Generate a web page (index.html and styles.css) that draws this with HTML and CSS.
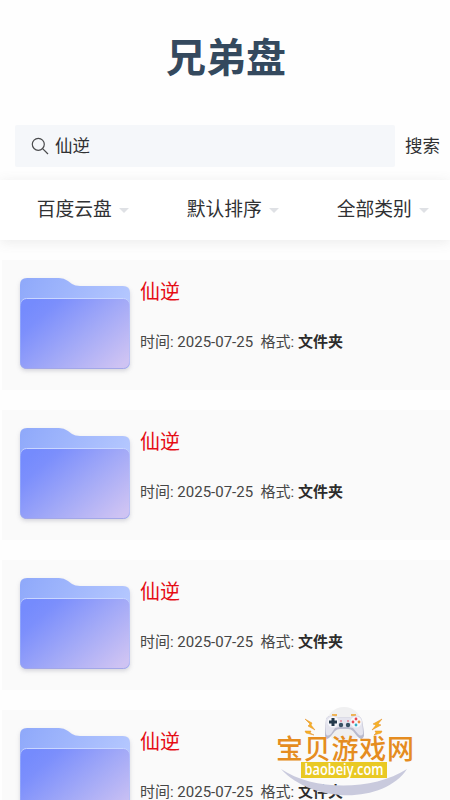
FILE: index.html
```html
<!DOCTYPE html>
<html lang="zh-CN">
<head>
<meta charset="utf-8">
<title>兄弟盘</title>
<link rel="stylesheet" href="styles.css">
</head>
<body>
<svg width="0" height="0" class="defs">
  <defs>
    <linearGradient id="back" x1="0" y1="0" x2="1" y2="0.5"><stop offset="0" stop-color="#8ea8fa"/><stop offset="1" stop-color="#b9cbff"/></linearGradient>
    <linearGradient id="front" x1="0.05" y1="0.15" x2="1" y2="0.85"><stop offset="0" stop-color="#758bfd"/><stop offset="0.15" stop-color="#7c8ffc"/><stop offset="0.55" stop-color="#a2a9f7"/><stop offset="1" stop-color="#cec3f3"/></linearGradient>
    <linearGradient id="edge" x1="0" y1="0" x2="0" y2="1"><stop offset="0" stop-color="#c9d6ff"/><stop offset="0.12" stop-color="#b4c0fc" stop-opacity="0.2"/><stop offset="0.9" stop-color="#8f9bea" stop-opacity="0.2"/><stop offset="1" stop-color="#a3a7e8"/></linearGradient>
    <symbol id="folder" viewBox="0 0 110 94">
      <path d="M0 7Q0 0 7 0H39Q44 0 48 3L52 6Q55 8 60 8H103Q110 8 110 15V84Q110 91 103 91H7Q0 91 0 84Z" fill="url(#back)"/>
      <rect x="0.5" y="20.5" width="109" height="70" rx="6" fill="url(#front)" stroke="url(#edge)"/>
    </symbol>
  </defs>
</svg>
<main class="page">
  <h1 class="title">兄弟盘</h1>
  <div class="search">
    <div class="search-box">
      <svg class="search-icon" width="18" height="18" viewBox="0 0 18 18" fill="none" stroke="#4a4b4d" stroke-width="1.2"><circle cx="7.3" cy="7.3" r="6"/><path d="M11.6 11.6L17 17"/></svg>
      <span>仙逆</span>
    </div>
    <span class="search-action">搜索</span>
  </div>
  <nav class="filters">
    <span class="filter">百度云盘</span>
    <span class="filter">默认排序</span>
    <span class="filter">全部类别</span>
  </nav>
  <section class="list">
    <article class="card"><svg class="folder"><use href="#folder"/></svg><div class="info"><h2>仙逆</h2><p>时间: 2025-07-25&nbsp; 格式: <b>文件夹</b></p></div></article>
    <article class="card"><svg class="folder"><use href="#folder"/></svg><div class="info"><h2>仙逆</h2><p>时间: 2025-07-25&nbsp; 格式: <b>文件夹</b></p></div></article>
    <article class="card"><svg class="folder"><use href="#folder"/></svg><div class="info"><h2>仙逆</h2><p>时间: 2025-07-25&nbsp; 格式: <b>文件夹</b></p></div></article>
    <article class="card"><svg class="folder"><use href="#folder"/></svg><div class="info"><h2>仙逆</h2><p>时间: 2025-07-25&nbsp; 格式: <b>文件夹</b></p></div></article>
  </section>
  <svg class="badge" width="160" height="100" viewBox="0 0 160 100">
    <circle cx="79" cy="25" r="18" fill="#f0f0f1"/>
    <g fill="#f6b326" stroke="#e58c24" stroke-width="0.5">
      <path d="M40 19L47 23L46 25L50 30L43 26L45 24Z"/><path d="M40 31L46 31L45 33L49 35L41 33Z"/>
      <path d="M117 19L108 24L111 25L107 30L116 25L113 24Z"/><path d="M117 31L110 31L111 33L109 35L116 33Z"/>
    </g>
    <path d="M67 15h5M86 15h5" stroke="#efb354" stroke-width="2"/>
    <path d="M61 19Q63 15 69 16L74 17.500H84L89 16Q95 15 97 20Q99 30 99 36Q97 42 92 36L88 31Q86 29 83 29H75Q72 29 70 31L66 36Q61 42 60 36Q60 27 61 19Z" fill="#b9bacd"/>
    <path d="M61 19Q63 15 69 16L74 17.500H84L89 16Q95 15 97 20Q98 29 98 34Q96 37 93 34L88 28L83 27H75L70 28L66 34Q62 37 61 34Q60 27 61 19Z" fill="#e4e4ee"/>
    <circle cx="68" cy="22" r="5.5" fill="#f7f7fb"/><circle cx="91" cy="22" r="5.5" fill="#f7f7fb"/>
    <path d="M68 18v8M64 22h8" stroke="#253a4c" stroke-width="3"/>
    <g fill="#e94755"><circle cx="91" cy="19" r="1.4"/><circle cx="88" cy="22" r="1.4"/></g><circle cx="94" cy="22" r="1.4" fill="#ed8a40"/><circle cx="91" cy="25" r="1.4" fill="#31acc5"/>
    <path d="M75 21h2M82 21h2" stroke="#df5368"/><circle cx="76" cy="25" r="2.200" fill="#385064"/><circle cx="83" cy="25" r="2.200" fill="#385064"/>
    <path d="M16 69C48 91 108 91 142 69C119 104 48 104 16 69Z" fill="#c9cadd"/>
    <rect x="36" y="62" width="86" height="16" fill="#e9c924"/>
    <text x="79" y="74.500" class="badge-url" textLength="79" lengthAdjust="spacingAndGlyphs">baobeiy.com</text>
    <text x="11" y="58.500" class="badge-name" textLength="138">宝贝游戏网</text>
  </svg>
</main>
</body>
</html>
```
FILE: styles.css
```css
* { box-sizing: border-box; }
html, body { margin: 0; height: 800px; overflow: hidden; background: #fefefe; }
body { font-family: Roboto, "Noto Sans CJK SC", sans-serif; color: #303133; }
.defs { position: absolute; }
.page { position: relative; height: 800px; overflow: hidden; padding-left: 2px; }
.title { margin: 0; height: 125px; padding-top: 30px; font-size: 40px; line-height: 58px; font-weight: 700; color: #34495e; text-align: center; }
.search { display: flex; height: 42px; padding: 0 10px 0 13px; align-items: center; font-size: 17.5px; }
.search-box { display: flex; align-items: center; width: 380px; height: 42px; padding-left: 16px; background: #f5f7fa; border-radius: 2px; }
.search-box span, .search-action { padding-bottom: 3px; }
.search-icon { margin-right: 6px; }
.search-action { margin-left: 10px; white-space: nowrap; }
.filters { display: grid; grid-template-columns: repeat(3, 150px); height: 60px; margin: 13px 0 0 -2px; background: #fff; box-shadow: 0 2px 12px rgba(100, 101, 102, 0.12); }
.filter { display: flex; align-items: center; justify-content: center; gap: 7px; padding: 0 0 5px 15.5px; font-size: 18.75px; }
.filter::after { content: ""; margin-top: 6px; border: 5px solid transparent; border-top: 5px solid #dfe1e5; border-bottom: 0; }
.list { display: grid; gap: 20px; padding-top: 20px; }
.card { display: flex; height: 130px; padding: 18px; background: #fafafa; }
.folder { width: 110px; height: 94px; filter: drop-shadow(0 2px 2px rgba(70, 70, 100, 0.2)); }
.info { padding-left: 10px; }
h2 { margin: 0; font-size: 20px; line-height: 28px; font-weight: 400; color: #e50c14; }
p { margin: 25px 0 0; font-size: 15px; line-height: 22px; white-space: nowrap; color: #464646; }
b { color: #2c2c2c; font-weight: 700; }
.badge { position: absolute; left: 265px; top: 700px; }
.badge-url { font: 600 16px "Open Sans", sans-serif; fill: #fff; text-anchor: middle; }
.badge-name { font: 500 27px "Noto Sans CJK SC", sans-serif; fill: #e58c20; }
```
